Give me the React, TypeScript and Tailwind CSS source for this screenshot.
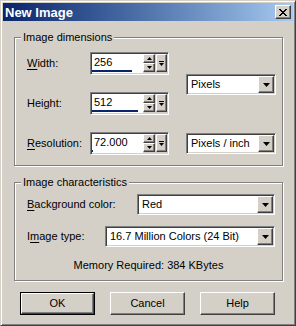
import React from 'react';

const raised =
  'border border-t-white border-l-white border-r-[#404040] border-b-[#404040] shadow-[inset_-1px_-1px_#808080] bg-[#d4d0c8]';
const sunken =
  'border border-t-[#808080] border-l-[#808080] border-r-white border-b-white shadow-[inset_1px_1px_#404040,inset_-1px_-1px_#d4d0c8]';

const DownArrow = () => (
  <svg width="7" height="4" viewBox="0 0 7 4">
    <path d="M0 0h7L3.5 4z" fill="#000" />
  </svg>
);

const Combo = ({ value, width }: { value: string; width: string }) => (
  <div className={`${sunken} ${width} h-[21px] bg-white flex items-stretch p-[1px]`}>
    <div className="flex-1 flex items-center pl-[3px] leading-none">{value}</div>
    <div className={`${raised} w-[16px] flex items-center justify-center`}>
      <DownArrow />
    </div>
  </div>
);

const Spin = ({ value, bar }: { value: string; bar: number }) => (
  <div className={`${sunken} w-[79px] h-[23px] flex p-[1px] bg-[#d4d0c8]`}>
    <div className="w-[51px] bg-white flex flex-col">
      <div className="flex-1 flex items-center pl-[2px] leading-none">{value}</div>
      <div className="h-[2px] mb-[1px] bg-[#0a246a]" style={{ width: bar }} />
    </div>
    <div className="flex items-start gap-[1px]">
      <div className="flex flex-col w-[12px]">
        <div className={`${raised} h-[9px] flex items-center justify-center`}>
          <svg width="5" height="3" viewBox="0 0 5 3">
            <path d="M2.5 0L5 3H0z" fill="#000" />
          </svg>
        </div>
        <div className={`${raised} h-[9px] flex items-center justify-center`}>
          <svg width="5" height="3" viewBox="0 0 5 3">
            <path d="M0 0h5L2.5 3z" fill="#000" />
          </svg>
        </div>
      </div>
      <div className={`${raised} w-[11px] h-[18px] flex flex-col items-center justify-center gap-[1px]`}>
        <div className="w-[5px] h-[1px] bg-black" />
        <svg width="5" height="3" viewBox="0 0 5 3">
          <path d="M0 0h5L2.5 3z" fill="#000" />
        </svg>
      </div>
    </div>
  </div>
);

const GroupBox = ({ label, className, children }: { label: string; className: string; children: React.ReactNode }) => (
  <div className={`relative border border-[#808080] shadow-[inset_1px_1px_#fff,1px_1px_#fff] ${className}`}>
    <span className="absolute left-[6px] -top-[7px] px-[2px] leading-[13px] bg-[#d4d0c8]">{label}</span>
    {children}
  </div>
);

const Label = ({ pre = '', u = '', post, width }: { pre?: string; u?: string; post: string; width: string }) => (
  <div className={`${width} leading-none`}>
    {pre}
    {u && <span className="underline underline-offset-2">{u}</span>}
    {post}
  </div>
);

const Button = ({ text, isDefault = false }: { text: string; isDefault?: boolean }) => (
  <div className={`w-[75px] h-[23px] ${isDefault ? 'border border-black' : ''}`}>
    <div className={`${raised} w-full h-full flex items-center justify-center leading-none`}>{text}</div>
  </div>
);

export default function App() {
  return (
    <div className="w-[296px] h-[326px] bg-[#d4d0c8] border border-t-[#d4d0c8] border-l-[#d4d0c8] border-r-[#404040] border-b-[#404040] shadow-[inset_1px_1px_#fff,inset_-1px_-1px_#808080] p-[2px] flex flex-col text-[11px] text-black font-['Liberation_Sans',Arial,sans-serif]">
      {/* title bar */}
      <div className="h-[18px] flex items-center justify-between bg-linear-to-r from-[#0a246a] to-[#a6caf0] pl-[2px] pr-[2px]">
        <span className="text-white font-bold text-[13px] leading-none">New Image</span>
        <div className={`${raised} w-[16px] h-[14px] flex items-center justify-center`}>
          <svg width="8" height="7" viewBox="0 0 8 7">
            <path d="M0 0l7 7M1 0l7 7M7 0L0 7M8 0L1 7" stroke="#000" strokeWidth="1" />
          </svg>
        </div>
      </div>

      <GroupBox label="Image dimensions" className="mt-[16px] ml-[11px] w-[269px] h-[129px]">
        <div className="flex pl-[12px]">
          <div className="flex flex-col pt-[14px]">
            <div className="h-[23px] flex items-center">
              <Label u="W" post="idth:" width="w-[63px]" />
              <Spin value="256" bar={40} />
            </div>
            <div className="h-[23px] mt-[17px] flex items-center">
              <Label post="Height:" width="w-[63px]" />
              <Spin value="512" bar={46} />
            </div>
            <div className="h-[23px] mt-[17px] flex items-center">
              <Label u="R" post="esolution:" width="w-[63px]" />
              <Spin value="72.000" bar={1} />
            </div>
          </div>
          <div className="flex flex-col ml-[17px] pt-[36px]">
            <Combo value="Pixels" width="w-[90px]" />
            <div className="mt-[38px]">
              <Combo value="Pixels / inch" width="w-[90px]" />
            </div>
          </div>
        </div>
      </GroupBox>

      <GroupBox label="Image characteristics" className="mt-[16px] ml-[11px] w-[269px] h-[99px]">
        <div className="flex flex-col pl-[12px] pt-[11px]">
          <div className="flex items-center">
            <Label u="B" post="ackground color:" width="w-[110px]" />
            <Combo value="Red" width="w-[138px]" />
          </div>
          <div className="flex items-center mt-[11px]">
            <Label pre="I" u="m" post="age type:" width="w-[78px]" />
            <Combo value="16.7 Million Colors (24 Bit)" width="w-[170px]" />
          </div>
        </div>
        <div className="mt-[12px] leading-[13px] text-center">Memory Required: 384 KBytes</div>
      </GroupBox>

      <div className="flex gap-[15px] pl-[17px] mt-[11px]">
        <Button text="OK" isDefault />
        <Button text="Cancel" />
        <Button text="Help" />
      </div>
    </div>
  );
}
